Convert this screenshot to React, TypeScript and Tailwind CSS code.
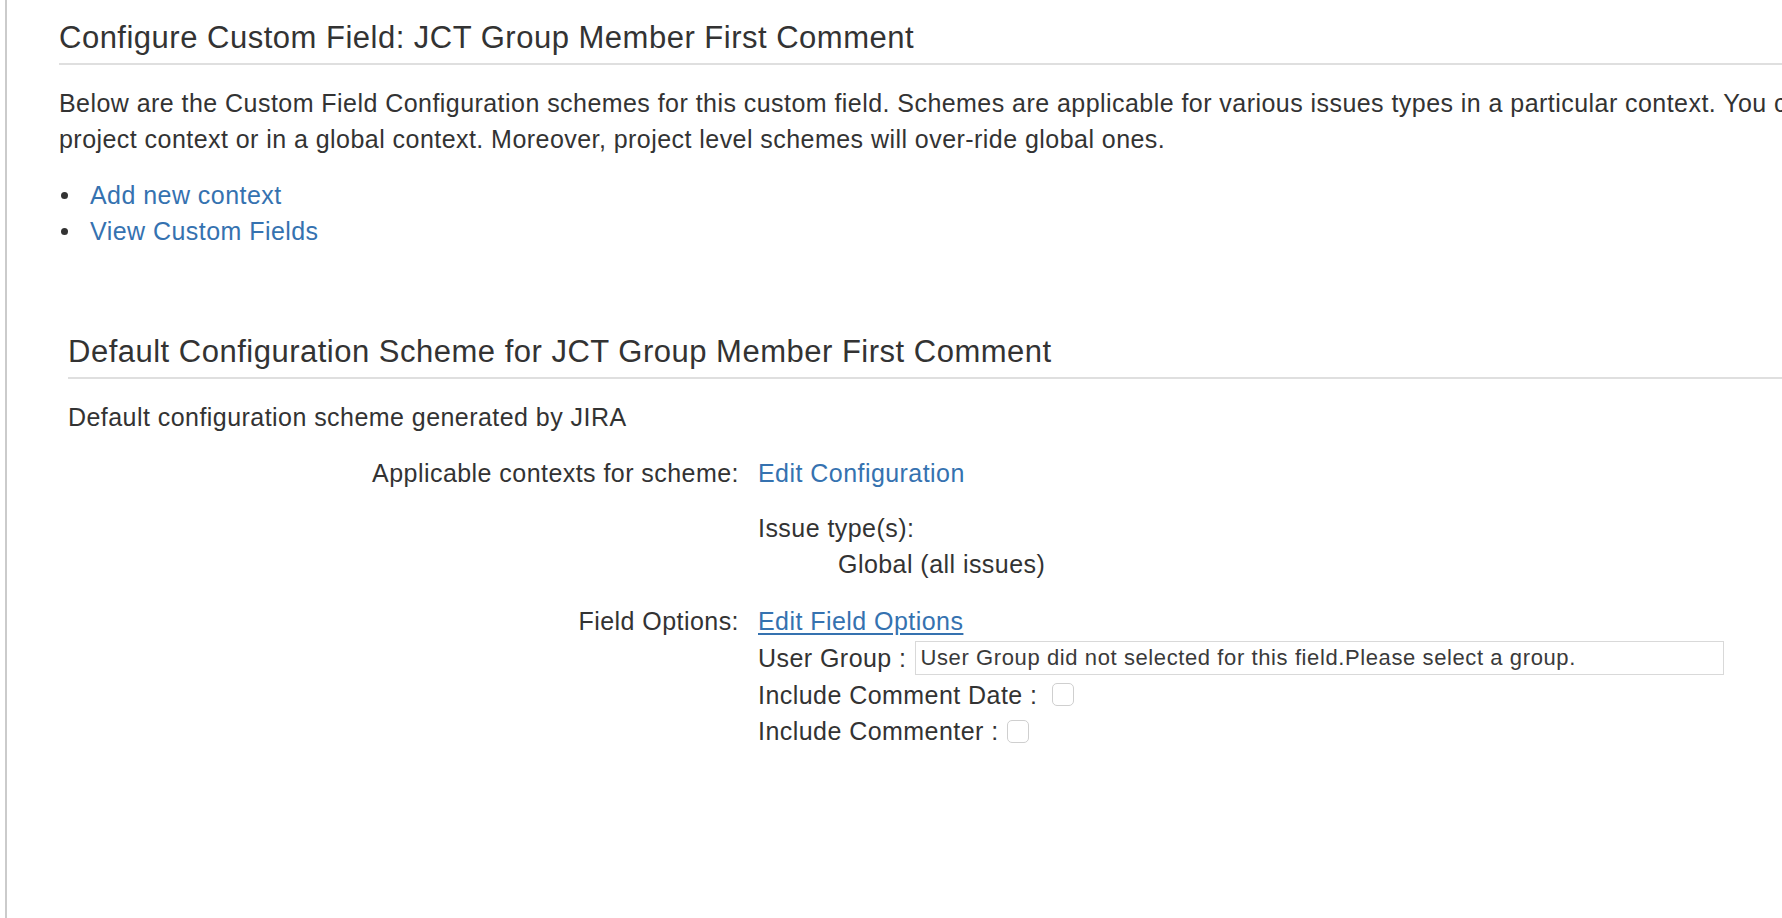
import React from "react";

const Heading = ({ children }: { children: React.ReactNode }) => (
    <h2 className="pt-[21px] pb-[8px] border-b-2 border-[#dfdfdf] text-[31px] leading-[34px] tracking-[0.5px] font-normal text-[#333]">
        {children}
    </h2>
);

const Checkbox = () => (
    <span className="inline-block h-[23px] w-[22px] rounded-[5px] border border-[#cfcfcf] bg-white" />
);

export default function App() {
    return (
        <div className="flex h-[918px] w-[1782px] overflow-hidden bg-white font-['Liberation_Sans',Arial,sans-serif] text-[25px] leading-[36px] tracking-[0.45px] text-[#333]">
            {/* left frame line */}
            <div className="ml-[5px] w-[2px] shrink-0 bg-[#cbcbcb]" />

            <main className="min-w-0 flex-1 pl-[52px]">
                <Heading>Configure Custom Field: JCT Group Member First Comment</Heading>

                <p className="mt-[20px] whitespace-nowrap">
                    Below are the Custom Field Configuration schemes for this custom field. Schemes are applicable for various issues types in a particular context. You can define a scheme in a
                    <br />
                    project context or in a global context. Moreover, project level schemes will over-ride global ones.
                </p>

                <ul className="mt-[20px]">
                    {["Add new context", "View Custom Fields"].map((label) => (
                        <li key={label} className="flex items-center">
                            <span className="ml-[2px] mr-[22px] h-[7px] w-[7px] rounded-full bg-[#333]" />
                            <a href="#" className="text-[#3572b0]">
                                {label}
                            </a>
                        </li>
                    ))}
                </ul>

                {/* Default scheme */}
                <section className="mt-[65px] pl-[9px]">
                    <Heading>Default Configuration Scheme for JCT Group Member First Comment</Heading>
                    <p className="mt-[20px]">Default configuration scheme generated by JIRA</p>

                    <div className="mt-[20px] grid grid-cols-[671px_1fr] gap-x-[19px]">
                        <div className="text-right">Applicable contexts for scheme:</div>
                        <div>
                            <a href="#" className="text-[#3572b0]">
                                Edit Configuration
                            </a>
                            <div className="mt-[19px]">Issue type(s):</div>
                            <div className="pl-[80px]">Global (all issues)</div>
                        </div>

                        <div className="mt-[21px] text-right">Field Options:</div>
                        <div className="mt-[21px]">
                            <a href="#" className="text-[#3572b0] underline underline-offset-[3px]">
                                Edit Field Options
                            </a>
                            <div className="flex h-[37px] items-center">
                                <span>User Group :</span>
                                <div className="ml-[8px] flex h-[34px] w-[809px] items-center border border-[#d9d9d9] px-[5px] text-[22px] tracking-[0.6px] text-[#3a3a3a]">
                                    User Group did not selected for this field.Please select a group.
                                </div>
                            </div>
                            <div className="flex h-[37px] items-center gap-[15px]">
                                <span>Include Comment Date :</span>
                                <Checkbox />
                            </div>
                            <div className="flex h-[36px] items-center gap-[8px]">
                                <span>Include Commenter :</span>
                                <Checkbox />
                            </div>
                        </div>
                    </div>
                </section>
            </main>
        </div>
    );
}
